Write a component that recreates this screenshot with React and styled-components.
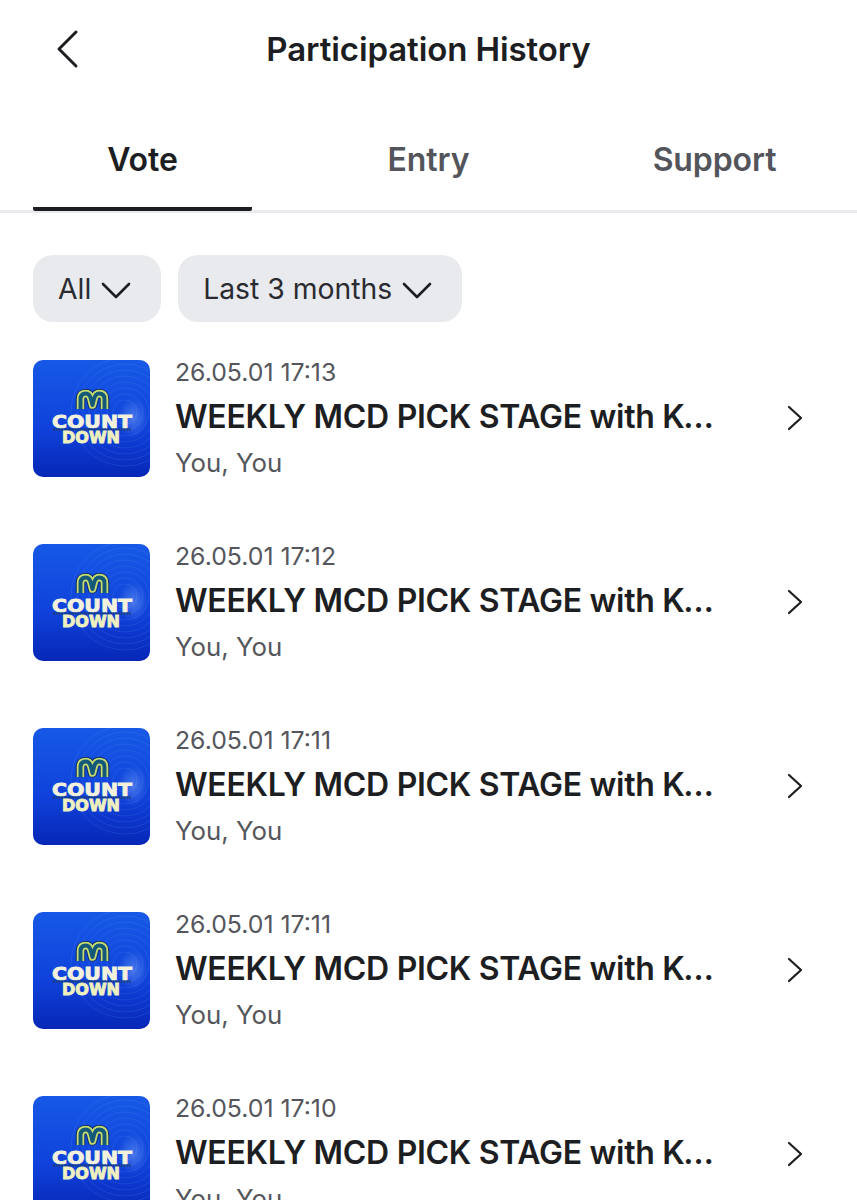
import React from "react";
import styled, { createGlobalStyle } from "styled-components";

const Global = createGlobalStyle`
  html, body { margin: 0; padding: 0; background: #fff; }
  body { font-family: Inter, "Liberation Sans", sans-serif; }
`;
const Page = styled.div`
  width: 857px; height: 1200px; overflow: hidden; background: #fff; color: #1d1e22;
`;
const Header = styled.header`
  height: 98px; display: flex; align-items: center; justify-content: center; position: relative;
`;
const BackIcon = styled.svg`
  position: absolute; left: 54px; top: 29px; width: 28px; height: 40px;
  fill: none; stroke: #1d1e22; stroke-width: 3; stroke-linecap: round; stroke-linejoin: round;
`;
const Title = styled.h1`
  margin: 1px 0 0; font-size: 33px; font-weight: 600; letter-spacing: -0.1px; line-height: 1;
`;
const Tabs = styled.nav`
  height: 115px; box-sizing: border-box; padding: 0 33px; display: flex; justify-content: space-between;
  border-bottom: 3px solid #e9eaed;
`;
const Tab = styled.div`
  width: 219px; height: 113px; box-sizing: border-box; padding-top: 42px; text-align: center;
  font-size: 32px; line-height: 40px; font-weight: 600; letter-spacing: -0.1px;
  color: ${p => (p.$active ? "#1d1e22" : "#53555b")};
  border-bottom: 4px solid ${p => (p.$active ? "#1d1e22" : "transparent")};
  border-radius: 0 0 2px 2px;
`;
const Filters = styled.div`
  display: flex; gap: 17px; padding: 42px 33px 0;
`;
const Chip = styled.button`
  height: 67px; border: 0; border-radius: 20px; background: #e9eaee; padding: 0 31px 0 25px;
  display: flex; align-items: center; gap: 10px; font-family: inherit; font-size: 28.3px; font-weight: 400;
  color: #2a2b30;
`;
const Caret = styled.svg`
  width: 30px; height: 18px; fill: none; stroke: #1d1e22; stroke-width: 2.6; stroke-linecap: round; stroke-linejoin: round;
  margin-top: 3px; margin-right: -1px;
`;
const List = styled.div`
  display: flex; flex-direction: column; gap: 67px; padding: 38px 33px 0;
`;
const Row = styled.div`
  display: flex; align-items: flex-start; height: 117px; position: relative;
`;
const Thumb = styled.svg`
  flex: none; width: 117px; height: 117px; border-radius: 10px; display: block;
`;
const Info = styled.div`
  margin-left: 26px; width: 542px; display: flex; flex-direction: column;
`;
const Date = styled.div`
  font-size: 24.8px; line-height: 25px; color: #54565c; margin-bottom: 13px; margin-left: -1px;
`;
const Name = styled.div`
  font-size: 32px; line-height: 40px; font-weight: 600; color: #1d1e22; letter-spacing: -0.3px;
  white-space: nowrap; overflow: hidden; text-overflow: ellipsis; margin-top: -1px; margin-left: -1px;
`;
const Sub = styled.div`
  font-size: 25.8px; line-height: 32px; color: #54565c; margin-top: 10px; margin-left: -1px;
`;
const Chevron = styled.svg`
  position: absolute; left: 753px; top: 45px; width: 18px; height: 26px;
  fill: none; stroke: #1d1e22; stroke-width: 2.2; stroke-linecap: round; stroke-linejoin: round;
`;

const logoFont = { fontFamily: '"DejaVu Sans", sans-serif', fontWeight: 700 };
const M_PATH = "M47.5 49 V39 Q47.5 33.5 53 33.5 Q56.5 33.5 58 39 L59.5 45 L61 39 Q62.5 33.5 66 33.5 Q71.5 33.5 71.5 39 V49";

function Logo({ id }) {
  return (
    <Thumb viewBox="0 0 117 117">
      <defs>
        <linearGradient id={`bg${id}`} x1="0" y1="0" x2="0" y2="1">
          <stop offset="0" stopColor="#1759e6" />
          <stop offset="0.6" stopColor="#0f41da" />
          <stop offset="1" stopColor="#0727b6" />
        </linearGradient>
        <radialGradient id={`gl${id}`} cx="0.5" cy="0.5" r="0.5">
          <stop offset="0" stopColor="#9cc4ff" stopOpacity="0.4" />
          <stop offset="1" stopColor="#9cc4ff" stopOpacity="0" />
        </radialGradient>
      </defs>
      <rect width="117" height="117" fill={`url(#bg${id})`} />
      {[12, 18, 24, 30, 36, 42, 48, 54].map(r => (
        <circle key={r} cx="92" cy="52" r={r} fill="none" stroke="#6aa4fa" strokeOpacity="0.2" strokeWidth="0.8" />
      ))}
      <ellipse cx="100" cy="58" rx="15" ry="20" fill={`url(#gl${id})`} />
      <path d={M_PATH} fill="none" stroke="#0e2f5e" strokeWidth="9.5" strokeLinejoin="round" />
      <path d={M_PATH} fill="none" stroke="#c9dc74" strokeWidth="7.5" strokeLinejoin="round" />
      <path d={M_PATH} fill="none" stroke="#145a78" strokeWidth="4" strokeLinejoin="round" />
      <text x="59" y="68" textAnchor="middle" fontSize="18" textLength="80" lengthAdjust="spacingAndGlyphs" fill="#f2f2dc" stroke="#f2f2dc" strokeWidth="0.9" style={logoFont}>COUNT</text>
      <line x1="20" y1="69.5" x2="98" y2="69.5" stroke="#1a3f86" strokeWidth="2.6" strokeDasharray="2 0.7" />
      <text x="58" y="83" textAnchor="middle" fontSize="16.5" textLength="58" lengthAdjust="spacingAndGlyphs" fill="#eef0c0" stroke="#eef0c0" strokeWidth="0.9" style={logoFont}>DOWN</text>
    </Thumb>
  );
}

const items = ["26.05.01 17:13", "26.05.01 17:12", "26.05.01 17:11", "26.05.01 17:11", "26.05.01 17:10"];

export default function App() {
  return (
    <Page>
      <Global />
      <Header>
        <BackIcon viewBox="0 0 28 40"><path d="M22 3 L5 20 L22 37" /></BackIcon>
        <Title>Participation History</Title>
      </Header>
      <Tabs>
        <Tab $active>Vote</Tab>
        <Tab>Entry</Tab>
        <Tab>Support</Tab>
      </Tabs>
      <Filters>
        <Chip>All<Caret viewBox="0 0 30 18"><path d="M2 3 L15 16 L28 3" /></Caret></Chip>
        <Chip>Last 3 months<Caret viewBox="0 0 30 18"><path d="M2 3 L15 16 L28 3" /></Caret></Chip>
      </Filters>
      <List>
        {items.map((d, i) => (
          <Row key={i}>
            <Logo id={i} />
            <Info>
              <Date>{d}</Date>
              <Name>WEEKLY MCD PICK STAGE with KCON LA</Name>
              <Sub>You, You</Sub>
            </Info>
            <Chevron viewBox="0 0 18 26"><path d="M3 2 L15 13 L3 24" /></Chevron>
          </Row>
        ))}
      </List>
    </Page>
  );
}
